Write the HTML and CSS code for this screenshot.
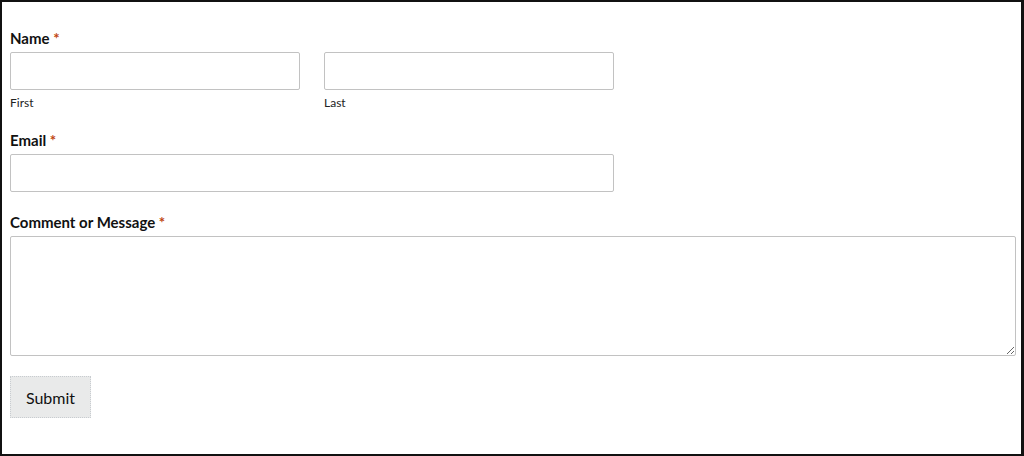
FILE: index.html
```html
<!DOCTYPE html>
<html lang="en">
<head>
  <meta charset="UTF-8" />
  <meta name="viewport" content="width=device-width, initial-scale=1.0" />
  <title>Contact Form</title>
  <link rel="stylesheet" href="styles.css">
</head>
<body>
  <div class="frame">
    <form class="contact-form">
      <div class="field">
        <label class="field-label">Name <span class="req">*</span></label>
        <div class="name-row">
          <div class="name-part">
            <input type="text" class="text-input">
            <span class="sub-label">First</span>
          </div>
          <div class="name-part">
            <input type="text" class="text-input">
            <span class="sub-label">Last</span>
          </div>
        </div>
      </div>

      <div class="field">
        <label class="field-label">Email <span class="req">*</span></label>
        <input type="email" class="text-input email-input">
      </div>

      <div class="field">
        <label class="field-label">Comment or Message <span class="req">*</span></label>
        <textarea class="message-input"></textarea>
      </div>

      <button type="submit" class="submit-btn">Submit</button>
    </form>
  </div>
</body>
</html>
```

FILE: styles.css
```css
html, body { margin: 0; padding: 0; background: #fff; }
body { font-family: Lato, "Liberation Sans", sans-serif; color: #111; }
.frame { box-sizing: border-box; width: 1024px; height: 456px; border: 2px solid #111; border-right-width: 3px; padding: 27px 6px 0 8px; }
.contact-form { display: flex; flex-direction: column; }
.field { display: flex; flex-direction: column; margin-bottom: 21px; }
.field-label { font-size: 15px; font-weight: 700; line-height: 18px; margin-bottom: 5px; }
.req { color: #c0440f; font-weight: 700; }
.name-row { display: flex; gap: 24px; }
.name-part { display: flex; flex-direction: column; width: 290px; }
.text-input { box-sizing: border-box; width: 100%; height: 38px; border: 1px solid #c2c2c2; border-radius: 2px; padding: 0 8px; font: inherit; background: #fff; margin: 0; }
.sub-label { font-size: 12px; line-height: 14px; margin-top: 6px; color: #222; }
.email-input { width: 604px; }
.message-input { box-sizing: border-box; width: 1006px; height: 120px; border: 1px solid #c2c2c2; border-radius: 2px; margin: 0; font: inherit; resize: vertical; }
.submit-btn { align-self: flex-start; width: 81px; height: 42px; margin-top: -1px; background: #e9eaea; border: 1px dotted #c8ccd0; font-family: Lato, "Liberation Sans", sans-serif; font-size: 16px; color: #111; cursor: pointer; }
```
